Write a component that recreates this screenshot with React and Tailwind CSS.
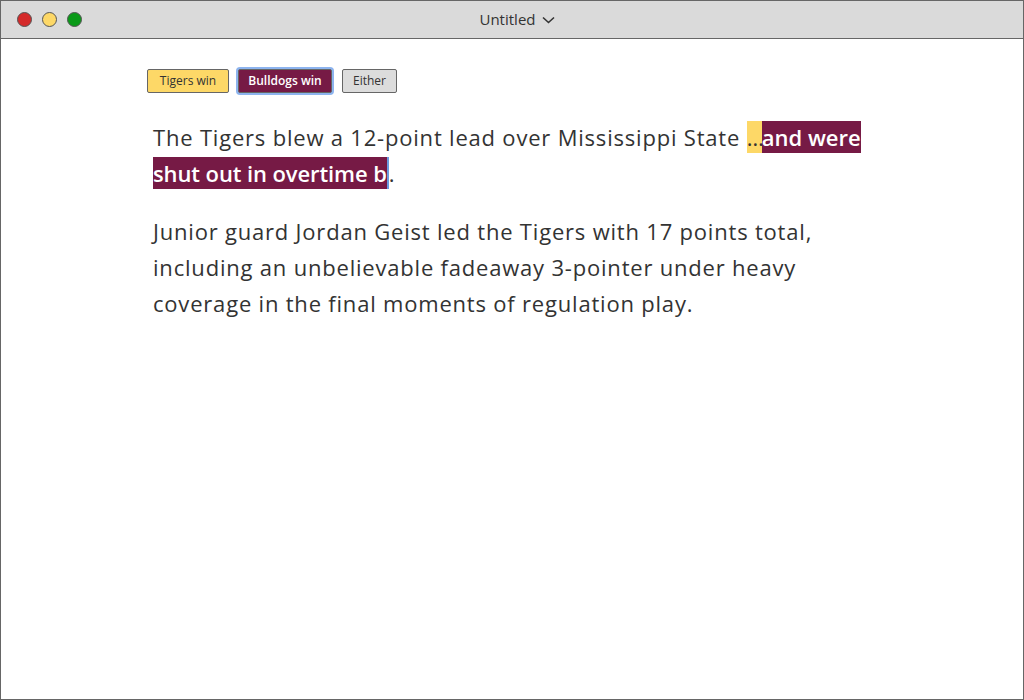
import React from 'react';

const font = { fontFamily: '"Open Sans", "Noto Sans", sans-serif' };

const Light = ({ color }) => (
  <span className={`block w-[15px] h-[15px] rounded-full border border-[#555] ${color}`} />
);

export default function App() {
  return (
    <div className="w-[1024px] h-[700px] bg-white border border-[#666] flex flex-col" style={font}>
      {/* barre de titre */}
      <div className="relative h-[38px] shrink-0 bg-[#dadada] border-b border-[#666] flex items-center">
        <div className="flex items-center gap-[10px] pl-[16px]">
          <Light color="bg-[#d42a2a]" />
          <Light color="bg-[#fdd867]" />
          <Light color="bg-[#0a9a18]" />
        </div>
        <div className="absolute inset-0 flex items-center justify-center gap-[6px] pl-[10px] text-[15px] text-[#333]">
          <span>Untitled</span>
          <svg width="13" height="8" viewBox="0 0 13 8" fill="none" stroke="#333" strokeWidth="1.6">
            <path d="M1 1.5 L6.5 6.5 L12 1.5" />
          </svg>
        </div>
      </div>

      <div className="flex-1 pl-[146px] pt-[30px]">
        <div className="flex items-center gap-[9px] text-[12px]">
          <button className="w-[82px] h-[24px] bg-[#fdd867] border border-[#666] rounded-[2px] text-[#333]">
            Tigers win
          </button>
          <button className="w-[94px] h-[24px] bg-[#761a45] border border-[#666] rounded-[2px] text-white font-semibold ring-2 ring-[#8db4ef]">
            Bulldogs win
          </button>
          <button className="ml-[1px] w-[55px] h-[24px] bg-[#dcdcdc] border border-[#666] rounded-[2px] text-[#333]">
            Either
          </button>
        </div>

        <div className="pl-[6px] mt-[26px] text-[22px] leading-[36px] tracking-[0.8px] text-[#333] w-[740px]">
          <p>
            The Tigers blew a 12-point lead over Mississippi State{' '}
            <span className="bg-[#fdd867] py-[1px] tracking-[-2px]">…</span>
            <span className="bg-[#761a45] text-white font-semibold py-[1px] tracking-normal">and were</span>
            <br />
            <span className="bg-[#761a45] text-white font-semibold py-[1px] tracking-[-0.1px]">shut out in overtime b</span>
            <span className="border-l-2 border-[#6a9be0] py-[1px]">.</span>
          </p>
          <p className="mt-[22px]">
            Junior guard Jordan Geist led the Tigers with 17 points total,
            <br />
            including an unbelievable fadeaway 3-pointer under heavy
            <br />
            coverage in the final moments of regulation play.
          </p>
        </div>
      </div>
    </div>
  );
}
